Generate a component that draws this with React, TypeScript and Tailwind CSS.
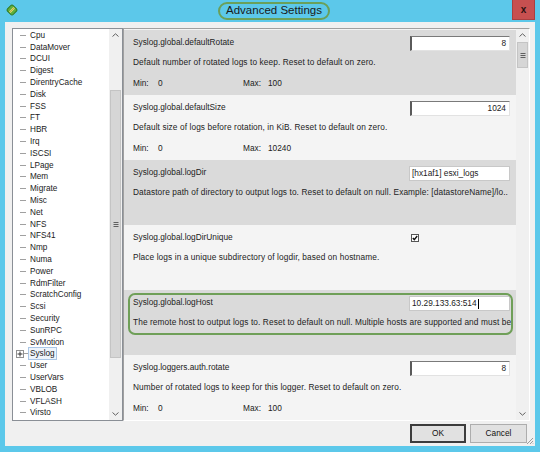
import React from "react";

const treeItems = [
  "Cpu","DataMover","DCUI","Digest","DirentryCache","Disk","FSS","FT","HBR","Irq","ISCSI","LPage","Mem","Migrate","Misc","Net","NFS","NFS41","Nmp","Numa","Power","RdmFilter","ScratchConfig","Scsi","Security","SunRPC","SvMotion","Syslog","User","UserVars","VBLOB","VFLASH","Virsto",
];

function Chevron({ down }: { down?: boolean }) {
  return (
    <svg width="7" height="4" viewBox="0 0 7 4" className={down ? "rotate-180" : ""}>
      <path d="M0.5 3.5 L3.5 0.8 L6.5 3.5" fill="none" stroke="#606060" strokeWidth="1" />
    </svg>
  );
}

function Grip() {
  return (
    <svg width="6" height="5" viewBox="0 0 6 5">
      <path d="M0.5 0.5H5.5M0.5 2.5H5.5M0.5 4.5H5.5" stroke="#606060" strokeWidth="1" />
    </svg>
  );
}

function Scrollbar({ thumbTop, thumbH }: { thumbTop: number; thumbH: number }) {
  return (
    <div className="w-[13px] h-full flex flex-col bg-[#f0f0f0]">
      <div className="h-[12px] flex items-center justify-center">
        <Chevron />
      </div>
      <div className="flex-1 flex flex-col px-[1px]">
        <div style={{ height: thumbTop }} />
        <div
          className="bg-[#d6d6d6] border border-[#c4c4c4] flex items-center justify-center"
          style={{ height: thumbH }}
        >
          <Grip />
        </div>
      </div>
      <div className="h-[12px] flex items-center justify-center">
        <Chevron down />
      </div>
    </div>
  );
}

function NumInput({ value }: { value: string }) {
  return (
    <div className="w-[100px] h-[15px] bg-white border border-t-[#7a7a7a] border-l-[#5a5a5a] border-l-2 border-r-[#e2e2e2] border-b-[#e2e2e2] flex items-center justify-end pr-[3px] text-[#222]">
      {value}
    </div>
  );
}

function TextInput({ value, caret }: { value: string; caret?: boolean }) {
  return (
    <div className="w-[101px] h-[15px] bg-white border border-[#c8c8c8] flex items-center pl-[2px] text-[#222]">
      <span>{value}</span>
      {caret && <span className="w-px h-[10px] bg-black ml-[1px]" />}
    </div>
  );
}

function Checkbox() {
  return (
    <div className="w-[100px] h-[15px]">
      <div className="ml-[1px] mt-[3px] w-[8px] h-[8px] bg-white border border-[#555] flex items-center justify-center">
        <svg width="6" height="6" viewBox="0 0 6 6">
          <path d="M0.8 3 L2.3 4.6 L5.2 1" fill="none" stroke="#111" strokeWidth="1.4" />
        </svg>
      </div>
    </div>
  );
}

type Entry = {
  name: string;
  desc: string;
  control: React.ReactNode;
  min?: string;
  max?: string;
  gray: boolean;
  highlight?: boolean;
};

const entries: Entry[] = [
  { name: "Syslog.global.defaultRotate", desc: "Default number of rotated logs to keep. Reset to default on zero.", control: <NumInput value="8" />, min: "0", max: "100", gray: true },
  { name: "Syslog.global.defaultSize", desc: "Default size of logs before rotation, in KiB. Reset to default on zero.", control: <NumInput value="1024" />, min: "0", max: "10240", gray: false },
  { name: "Syslog.global.logDir", desc: "Datastore path of directory to output logs to. Reset to default on null. Example: [datastoreName]/lo..", control: <TextInput value="[hx1af1] esxi_logs" />, gray: true },
  { name: "Syslog.global.logDirUnique", desc: "Place logs in a unique subdirectory of logdir, based on hostname.", control: <Checkbox />, gray: false },
  { name: "Syslog.global.logHost", desc: "The remote host to output logs to. Reset to default on null. Multiple hosts are supported and must be", control: <TextInput value="10.29.133.63:514" caret />, gray: true, highlight: true },
  { name: "Syslog.loggers.auth.rotate", desc: "Number of rotated logs to keep for this logger. Reset to default on zero.", control: <NumInput value="8" />, min: "0", max: "100", gray: false },
];

function EntryRow({ e }: { e: Entry }) {
  return (
    <div className={`relative h-[65px] pl-[9px] pr-[6px] pt-[6px] overflow-hidden ${e.gray ? "bg-[#dadada]" : "bg-[#f4f4f4]"}`}>
      {e.highlight && (
        <div className="absolute left-[4px] top-[3px] w-[385px] h-[42px] rounded-[7px] border-2 border-[#6f9f58] pointer-events-none" />
      )}
      <div className="flex justify-between h-[15px]">
        <span className="mt-[1px] leading-[10px]">{e.name}</span>
        {e.control}
      </div>
      <div className="mt-[6px] leading-[10px] whitespace-nowrap tracking-[0.1px]">{e.desc}</div>
      {e.min !== undefined && (
        <div className="mt-[11px] leading-[10px] flex">
          <span className="w-[25px]">Min:</span>
          <span className="w-[85px]">{e.min}</span>
          <span className="w-[25px]">Max:</span>
          <span>{e.max}</span>
        </div>
      )}
    </div>
  );
}

function TreeItem({ label }: { label: string }) {
  const isSyslog = label === "Syslog";
  return (
    <div className="h-[11.8px] flex items-center shrink-0">
      <div className="w-[15px] h-full relative flex items-center">
        {isSyslog ? (
          <>
            <div className="ml-[3px] w-[8px] h-[8px] border border-[#909090] bg-white flex items-center justify-center">
              <svg width="6" height="6" viewBox="0 0 6 6">
                <path d="M0.5 3H5.5M3 0.5V5.5" stroke="#333" strokeWidth="1" />
              </svg>
            </div>
            <div className="w-[4px] h-px bg-[#a0a0a0]" />
          </>
        ) : (
          <div className="ml-[7px] w-[6px] h-px bg-[#a0a0a0]" />
        )}
      </div>
      {isSyslog ? (
        <span className="px-[1px] h-[13px] leading-[11px] border border-[#a9c6e6] bg-[#eef5fc]">{label}</span>
      ) : (
        <span className="pl-[2px] leading-[11px]">{label}</span>
      )}
    </div>
  );
}

function AppIcon() {
  return (
    <svg width="12" height="12" viewBox="0 0 12 12">
      <rect x="2" y="2" width="8" height="8" rx="2" transform="rotate(45 6 6)" fill="#5fae3c" stroke="#2f7a22" strokeWidth="1" />
      <path d="M3.8 8.2 L8.2 3.8" stroke="#e8e070" strokeWidth="2" />
      <path d="M3.8 8.2 L8.2 3.8" stroke="#a08a30" strokeWidth="0.6" />
    </svg>
  );
}

export default function App() {
  return (
    <div className="w-[540px] h-[452px] bg-[#5cc8ea] flex flex-col font-['Liberation_Sans',Arial,sans-serif] text-[#1e1e1e] overflow-hidden">
      {/* title bar */}
      <div className="h-[22px] flex items-start shrink-0">
        <div className="ml-[6px] mt-[4px]">
          <AppIcon />
        </div>
        <div className="ml-[200px] mt-[2px] w-[112px] h-[18px] rounded-[9px] border-2 border-[#6aa05a] flex items-center justify-center text-[11.5px] text-[#1a1a1a]">
          Advanced Settings
        </div>
        <div className="ml-auto mr-[5px] w-[23px] h-[20px] bg-[#c75050] border border-[#a84040] border-t-0 flex items-center justify-center text-[10px] font-bold text-[#2a1010]">
          x
        </div>
      </div>

      {/* client area */}
      <div className="relative ml-[5px] w-[530px] h-[424px] bg-[#f0f0f0] flex flex-col">
        <div className="mt-[6px] ml-[7px] h-[393px] flex text-[8px]">
          {/* tree */}
          <div className="w-[111px] h-full bg-white border border-[#8a8f96] flex">
            <div className="flex-1 overflow-hidden flex flex-col pt-[0.5px] text-[8.2px] text-[#1a1a1a]">
              {treeItems.map((t) => (
                <TreeItem key={t} label={t} />
              ))}
            </div>
            <Scrollbar thumbTop={49} thumbH={268} />
          </div>

          {/* settings panel */}
          <div className="w-[407px] h-full border border-t-[#a0a0a0] border-l-[#a0a0a0] border-r-[#ffffff] border-b-[#ffffff] flex bg-[#f4f4f4]">
            <div className="flex-1 overflow-hidden flex flex-col pt-[1px] text-[8.3px] text-[#222]">
              {entries.map((e) => (
                <EntryRow key={e.name} e={e} />
              ))}
            </div>
            <Scrollbar thumbTop={1} thumbH={26} />
          </div>
        </div>

        {/* buttons */}
        <div className="h-[25px] flex items-center justify-end pr-[8px] gap-[4px] text-[8.3px]">
          <div className="w-[56px] h-[19px] border-2 border-[#3c3c3c] bg-[#e1e1e1] flex items-center justify-center text-[#111]">
            OK
          </div>
          <div className="w-[57px] h-[19px] border border-[#adadad] bg-[#e1e1e1] flex items-center justify-center text-[#111]">
            Cancel
          </div>
        </div>

        {/* resize grip */}
        <div className="absolute right-[1px] bottom-[1px]">
          <svg width="8" height="8" viewBox="0 0 8 8">
            <path d="M7 1 L1 7 M7 4 L4 7 M7 6.5 L6.5 7" stroke="#9a9a9a" strokeWidth="1" />
          </svg>
        </div>
      </div>
    </div>
  );
}
